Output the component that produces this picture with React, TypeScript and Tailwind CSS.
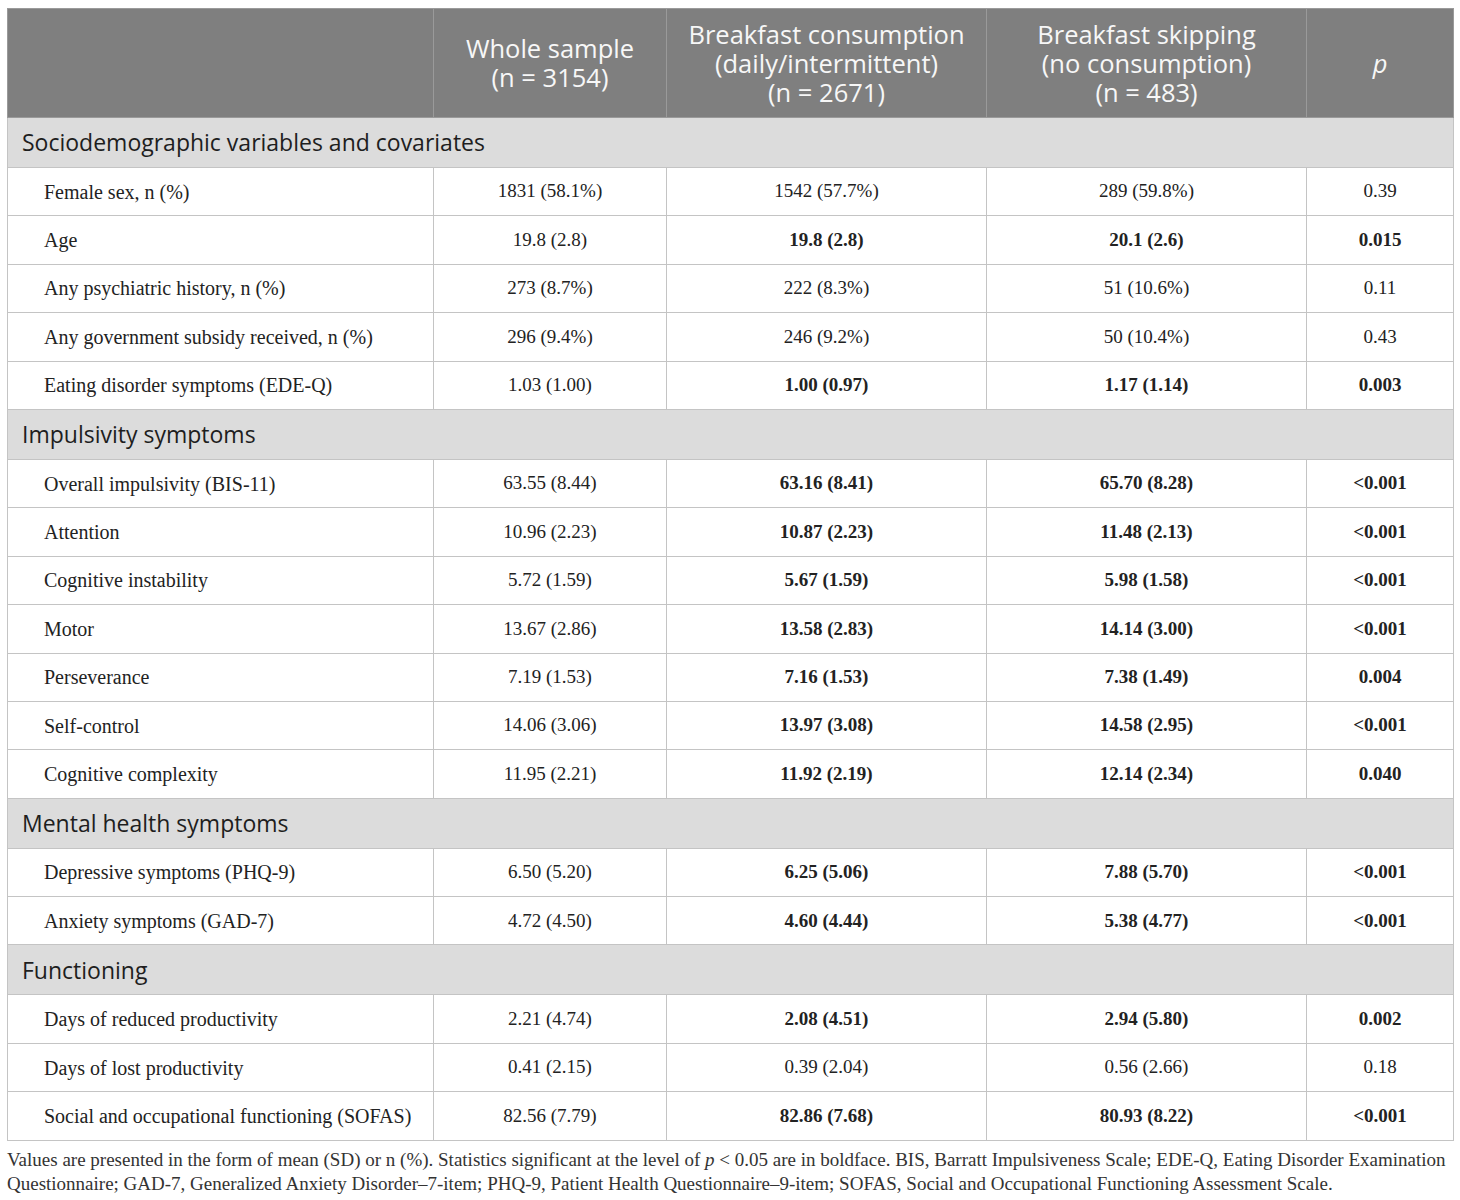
type Row = { label: string; v: [string, string, string, string]; bold?: boolean };
type Section = { title: string; rows: Row[] };

const sections: Section[] = [
  {
    title: 'Sociodemographic variables and covariates',
    rows: [
      { label: 'Female sex, n (%)', v: ['1831 (58.1%)', '1542 (57.7%)', '289 (59.8%)', '0.39'] },
      { label: 'Age', v: ['19.8 (2.8)', '19.8 (2.8)', '20.1 (2.6)', '0.015'], bold: true },
      { label: 'Any psychiatric history, n (%)', v: ['273 (8.7%)', '222 (8.3%)', '51 (10.6%)', '0.11'] },
      { label: 'Any government subsidy received, n (%)', v: ['296 (9.4%)', '246 (9.2%)', '50 (10.4%)', '0.43'] },
      { label: 'Eating disorder symptoms (EDE-Q)', v: ['1.03 (1.00)', '1.00 (0.97)', '1.17 (1.14)', '0.003'], bold: true },
    ],
  },
  {
    title: 'Impulsivity symptoms',
    rows: [
      { label: 'Overall impulsivity (BIS-11)', v: ['63.55 (8.44)', '63.16 (8.41)', '65.70 (8.28)', '<0.001'], bold: true },
      { label: 'Attention', v: ['10.96 (2.23)', '10.87 (2.23)', '11.48 (2.13)', '<0.001'], bold: true },
      { label: 'Cognitive instability', v: ['5.72 (1.59)', '5.67 (1.59)', '5.98 (1.58)', '<0.001'], bold: true },
      { label: 'Motor', v: ['13.67 (2.86)', '13.58 (2.83)', '14.14 (3.00)', '<0.001'], bold: true },
      { label: 'Perseverance', v: ['7.19 (1.53)', '7.16 (1.53)', '7.38 (1.49)', '0.004'], bold: true },
      { label: 'Self-control', v: ['14.06 (3.06)', '13.97 (3.08)', '14.58 (2.95)', '<0.001'], bold: true },
      { label: 'Cognitive complexity', v: ['11.95 (2.21)', '11.92 (2.19)', '12.14 (2.34)', '0.040'], bold: true },
    ],
  },
  {
    title: 'Mental health symptoms',
    rows: [
      { label: 'Depressive symptoms (PHQ-9)', v: ['6.50 (5.20)', '6.25 (5.06)', '7.88 (5.70)', '<0.001'], bold: true },
      { label: 'Anxiety symptoms (GAD-7)', v: ['4.72 (4.50)', '4.60 (4.44)', '5.38 (4.77)', '<0.001'], bold: true },
    ],
  },
  {
    title: 'Functioning',
    rows: [
      { label: 'Days of reduced productivity', v: ['2.21 (4.74)', '2.08 (4.51)', '2.94 (5.80)', '0.002'], bold: true },
      { label: 'Days of lost productivity', v: ['0.41 (2.15)', '0.39 (2.04)', '0.56 (2.66)', '0.18'] },
      { label: 'Social and occupational functioning (SOFAS)', v: ['82.56 (7.79)', '82.86 (7.68)', '80.93 (8.22)', '<0.001'], bold: true },
    ],
  },
];

const sans = "font-['Open_Sans',_'Liberation_Sans',_sans-serif]";
const serif = "font-['Liberation_Serif',_'Times_New_Roman',_serif]";

export default function App() {
  return (
    <div className="bg-white w-[1460px] min-h-[1200px] pt-[8px] px-[7px]">
      <table className="w-[1446px] border-collapse table-fixed border border-[#c4c4c4]">
        <colgroup>
          <col className="w-[426px]" />
          <col className="w-[233px]" />
          <col className="w-[320px]" />
          <col className="w-[320px]" />
          <col className="w-[147px]" />
        </colgroup>
        <thead>
          <tr className={`h-[109px] bg-[#7f7f7f] text-[#f7f7f7] text-[25.5px] leading-[29px] ${sans}`}>
            <th className="border border-[#9a9a9a] font-normal" />
            <th className="border border-[#9a9a9a] font-normal text-center">
              Whole sample
              <br />
              (n = 3154)
            </th>
            <th className="border border-[#9a9a9a] font-normal text-center">
              Breakfast consumption
              <br />
              (daily/intermittent)
              <br />
              (n = 2671)
            </th>
            <th className="border border-[#9a9a9a] font-normal text-center">
              Breakfast skipping
              <br />
              (no consumption)
              <br />
              (n = 483)
            </th>
            <th className="border border-[#9a9a9a] font-normal italic text-center">p</th>
          </tr>
        </thead>
        <tbody>
          {sections.map((s) => (
            <SectionRows key={s.title} section={s} />
          ))}
        </tbody>
      </table>
      <p className={`${serif} text-[19px] leading-[24px] text-[#333] mt-[7px] whitespace-nowrap`}>
        Values are presented in the form of mean (SD) or n (%). Statistics significant at the level of{' '}
        <span className="italic">p</span> &lt; 0.05 are in boldface. BIS, Barratt Impulsiveness Scale; EDE-Q, Eating
        Disorder Examination
        <br />
        Questionnaire; GAD-7, Generalized Anxiety Disorder–7-item; PHQ-9, Patient Health Questionnaire–9-item; SOFAS,
        Social and Occupational Functioning Assessment Scale.
      </p>
    </div>
  );
}

function SectionRows({ section }: { section: Section }) {
  return (
    <>
      <tr className="h-[50px] bg-[#dcdcdc]">
        <td colSpan={5} className={`${sans} text-[23px] text-[#1e1e1e] pl-[14px] border border-[#c4c4c4]`}>
          {section.title}
        </td>
      </tr>
      {section.rows.map((r) => (
        <tr key={r.label} className={`h-[48.4px] ${serif} text-[19px] text-[#222]`}>
          <td className="border border-[#c4c4c4] pl-[36px] text-[20px]">{r.label}</td>
          <td className="border border-[#c4c4c4] text-center">{r.v[0]}</td>
          <td className={`border border-[#c4c4c4] text-center ${r.bold ? 'font-bold' : ''}`}>{r.v[1]}</td>
          <td className={`border border-[#c4c4c4] text-center ${r.bold ? 'font-bold' : ''}`}>{r.v[2]}</td>
          <td className={`border border-[#c4c4c4] text-center ${r.bold ? 'font-bold' : ''}`}>{r.v[3]}</td>
        </tr>
      ))}
    </>
  );
}
